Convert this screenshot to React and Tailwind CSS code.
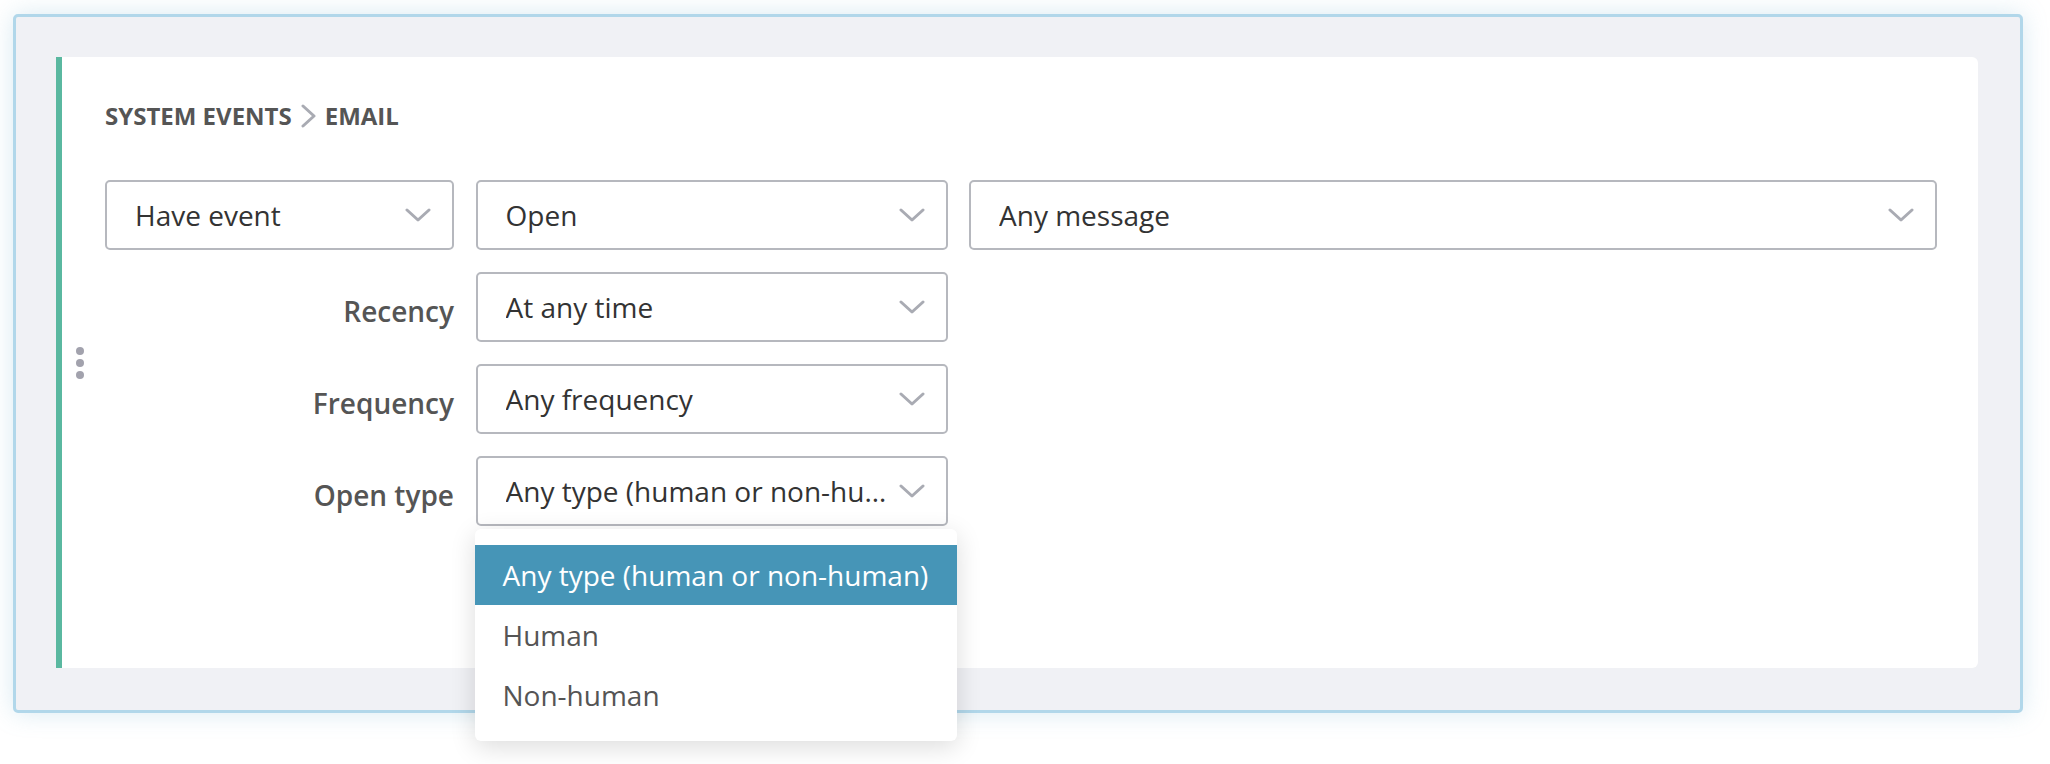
import React from "react";

function ChevronDown() {
  return (
    <svg width="26" height="14" viewBox="0 0 26 14" className="ml-[12px] shrink-0" fill="none">
      <path d="M2 2 L13 12 L24 2" stroke="#a9abb3" strokeWidth="3" strokeLinecap="round" strokeLinejoin="round" />
    </svg>
  );
}

function ChevronRight() {
  return (
    <svg width="17" height="24" viewBox="0 0 17 24" fill="none" className="mx-[8px] shrink-0">
      <path d="M3 2 L14 12 L3 22" stroke="#a9abb3" strokeWidth="3" strokeLinecap="round" strokeLinejoin="round" />
    </svg>
  );
}

function Select({ children }) {
  return (
    <div className="flex h-[70px] items-center rounded-[5px] border-2 border-[#b6b8be] bg-white pl-[28px] pr-[21px]">
      <span className="min-w-0 flex-1 truncate text-[28px] text-[#333333]">{children}</span>
      <ChevronDown />
    </div>
  );
}

function Label({ children }) {
  return (
    <div className="flex items-center justify-end pt-[7px] text-[28px] font-semibold text-[#555555]">
      {children}
    </div>
  );
}

export default function App() {
  return (
    <div className="min-h-screen bg-white pl-[13px] pt-[14px] font-['Open_Sans',sans-serif]">
      <div className="h-[699px] w-[2010px] rounded-[5px] border-[3px] border-[#b1d7ea] bg-[#f0f1f5] pb-[42px] pl-[40px] pr-[42px] pt-[40px] shadow-[0_0_24px_rgba(120,180,210,0.28)]">
        <div className="relative h-full rounded-r-[6px] border-l-[6px] border-[#5ab8a0] bg-white pl-[43px] pr-[41px] pt-[42px]">
          <div className="absolute left-[14px] top-1/2 flex -translate-y-1/2 flex-col gap-[4px]">
            <span className="h-[8px] w-[8px] rounded-full bg-[#a2a2ad]" />
            <span className="h-[8px] w-[8px] rounded-full bg-[#a2a2ad]" />
            <span className="h-[8px] w-[8px] rounded-full bg-[#a2a2ad]" />
          </div>

          <div className="flex items-center text-[24px] font-bold leading-[34px] text-[#555555]">
            <span>SYSTEM EVENTS</span>
            <ChevronRight />
            <span>EMAIL</span>
          </div>

          <div className="mt-[47px] grid grid-cols-[349px_472px_1fr] gap-x-[21.5px] gap-y-[22px]">
            <Select>Have event</Select>
            <Select>Open</Select>
            <Select>Any message</Select>

            <Label>Recency</Label>
            <Select>At any time</Select>
            <div />

            <Label>Frequency</Label>
            <Select>Any frequency</Select>
            <div />

            <Label>Open type</Label>
            <div className="relative">
              <Select>Any type (human or non-human)</Select>
              <div className="absolute left-[-1px] top-[73px] z-10 w-[482px] rounded-[6px] bg-white py-[16px] shadow-[0_6px_26px_rgba(0,0,0,0.14)]">
                <div className="flex h-[60px] items-center bg-[#4695b7] px-[28px] text-[28px] text-white">
                  Any type (human or non-human)
                </div>
                <div className="flex h-[60px] items-center px-[28px] text-[28px] text-[#555555]">Human</div>
                <div className="flex h-[60px] items-center px-[28px] text-[28px] text-[#555555]">Non-human</div>
              </div>
            </div>
            <div />
          </div>
        </div>
      </div>
    </div>
  );
}
